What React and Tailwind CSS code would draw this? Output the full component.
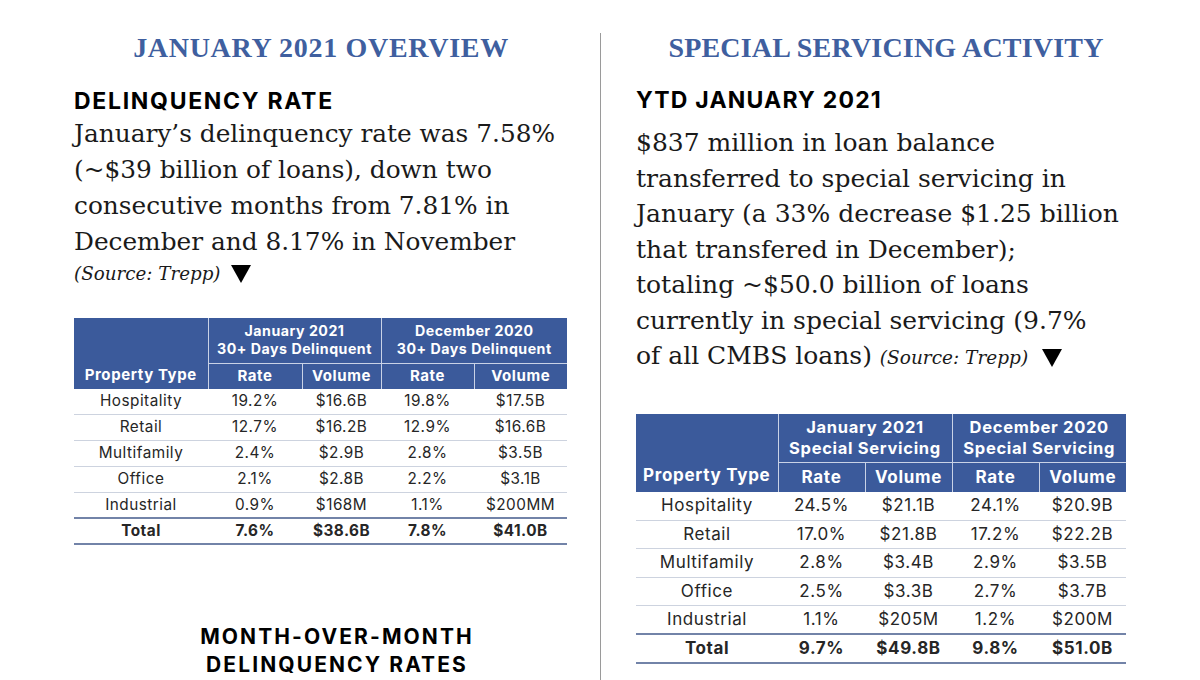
import React from 'react';

const TITLE = "font-['Liberation_Serif',serif]";
const SERIF = "font-['DejaVu_Serif',serif]";
const SANS = "font-['Inter',sans-serif]";

const delinquency = [
  ['Hospitality', '19.2%', '$16.6B', '19.8%', '$17.5B'],
  ['Retail', '12.7%', '$16.2B', '12.9%', '$16.6B'],
  ['Multifamily', '2.4%', '$2.9B', '2.8%', '$3.5B'],
  ['Office', '2.1%', '$2.8B', '2.2%', '$3.1B'],
  ['Industrial', '0.9%', '$168M', '1.1%', '$200MM'],
];
const delinquencyTotal = ['Total', '7.6%', '$38.6B', '7.8%', '$41.0B'];

const servicing = [
  ['Hospitality', '24.5%', '$21.1B', '24.1%', '$20.9B'],
  ['Retail', '17.0%', '$21.8B', '17.2%', '$22.2B'],
  ['Multifamily', '2.8%', '$3.4B', '2.9%', '$3.5B'],
  ['Office', '2.5%', '$3.3B', '2.7%', '$3.7B'],
  ['Industrial', '1.1%', '$205M', '1.2%', '$200M'],
];
const servicingTotal = ['Total', '9.7%', '$49.8B', '9.8%', '$51.0B'];

function Arrow() {
  return (
    <svg width="20" height="18" viewBox="0 0 20 18" className="inline-block">
      <path d="M0 0 H20 L10 18 Z" fill="#000" />
    </svg>
  );
}

function DataTable({ widths, groupA, groupB, rows, total, size }) {
  const big = size === 'lg';
  const head1 = big ? 'h-[49px]' : 'h-[45px]';
  const head2 = big ? 'h-[29px]' : 'h-[26px]';
  const rowH = big ? 'h-[28.6px]' : 'h-[25.9px]';
  const headText = big
    ? 'text-[16.5px] leading-[21px] tracking-[0.7px]'
    : 'text-[14.2px] leading-[18px] tracking-[0.5px]';
  const subText = big ? 'text-[17px] tracking-[0.7px]' : 'text-[15px] tracking-[0.6px]';
  const bodyText = big ? 'text-[17px] tracking-[0.6px]' : 'text-[15.3px] tracking-[0.5px]';

  return (
    <table className={`${SANS} border-collapse table-fixed`}>
      <colgroup>
        {widths.map((w, i) => (
          <col key={i} style={{ width: w }} />
        ))}
      </colgroup>
      <thead className="bg-[#3b5a9b] text-white">
        <tr className={head1}>
          <th rowSpan={2} className={`align-bottom pb-[3px] border-r border-[#c9d2e6] ${subText} font-bold`}>
            Property Type
          </th>
          <th colSpan={2} className={`border-r border-b border-[#c9d2e6] ${headText} font-bold`}>
            {groupA[0]}
            <br />
            {groupA[1]}
          </th>
          <th colSpan={2} className={`border-b border-[#c9d2e6] ${headText} font-bold`}>
            {groupB[0]}
            <br />
            {groupB[1]}
          </th>
        </tr>
        <tr className={head2}>
          <th className={`border-r border-[#c9d2e6] ${subText} font-bold`}>Rate</th>
          <th className={`border-r border-[#c9d2e6] ${subText} font-bold`}>Volume</th>
          <th className={`border-r border-[#c9d2e6] ${subText} font-bold`}>Rate</th>
          <th className={`${subText} font-bold`}>Volume</th>
        </tr>
      </thead>
      <tbody className={`text-[#262626] ${bodyText}`}>
        {rows.map((r, i) => (
          <tr
            key={r[0]}
            className={`${rowH} ${i < rows.length - 1 ? 'border-b border-[#cdd3df]' : 'border-b-2 border-[#7283a8]'}`}
          >
            {r.map((c, j) => (
              <td key={j} className="text-center">
                {c}
              </td>
            ))}
          </tr>
        ))}
        <tr className={`${rowH} border-b-2 border-[#7283a8] font-bold`}>
          {total.map((c, j) => (
            <td key={j} className="text-center">
              {c}
            </td>
          ))}
        </tr>
      </tbody>
    </table>
  );
}

export default function App() {
  return (
    <div className="w-[1200px] h-[680px] bg-white overflow-hidden flex">
      {/* Left column: overview */}
      <section className="w-[600px] pl-[74px] pr-[32px] pt-[30px] flex flex-col">
        <h1 className={`${TITLE} text-[#3f5f9f] font-bold text-[28px] leading-[36px] text-center w-[494px] tracking-[0.7px]`}>
          JANUARY 2021 OVERVIEW
        </h1>
        <h2 className={`${SANS} font-bold text-[23px] leading-[26px] mt-[22px] text-black tracking-[1.7px]`}>
          DELINQUENCY RATE
        </h2>
        <p className={`${SERIF} text-[24.8px] leading-[36px] text-[#1a1a1a] mt-[2px] whitespace-nowrap`}>
          January’s delinquency rate was 7.58%
          <br />
          (~$39 billion of loans), down two
          <br />
          consecutive months from 7.81% in
          <br />
          December and 8.17% in November
        </p>
        <p className={`${SERIF} italic text-[18.3px] leading-[28px] text-[#1a1a1a] flex items-center gap-[10px]`}>
          (Source: Trepp)
          <Arrow />
        </p>
        <div className="mt-[30px]">
          <DataTable
            widths={[134, 94, 79, 93, 93]}
            groupA={['January 2021', '30+ Days Delinquent']}
            groupB={['December 2020', '30+ Days Delinquent']}
            rows={delinquency}
            total={delinquencyTotal}
          />
        </div>
        <h3 className={`${SANS} font-bold text-[21px] leading-[28px] text-center text-black mt-[78px] w-[494px] pl-[32px] tracking-[2.1px]`}>
          MONTH-OVER-MONTH
          <br />
          DELINQUENCY RATES
        </h3>
      </section>

      {/* Divider */}
      <div className="w-px bg-[#9a9a9a] mt-[33px]" />

      {/* Right column: special servicing */}
      <section className="flex-1 pl-[35px] pt-[30px] flex flex-col">
        <h1 className={`${TITLE} text-[#3f5f9f] font-bold text-[28px] leading-[36px] text-center w-[500px] tracking-[0.2px]`}>
          SPECIAL SERVICING ACTIVITY
        </h1>
        <h2 className={`${SANS} font-bold text-[23px] leading-[26px] mt-[21px] text-black tracking-[1.2px]`}>
          YTD JANUARY 2021
        </h2>
        <p className={`${SERIF} text-[25px] leading-[35.5px] text-[#1a1a1a] mt-[12px] whitespace-nowrap`}>
          $837 million in loan balance
          <br />
          transferred to special servicing in
          <br />
          January (a 33% decrease $1.25 billion
          <br />
          that transfered in December);
          <br />
          totaling ~$50.0 billion of loans
          <br />
          currently in special servicing (9.7%
          <br />
          of all CMBS loans){' '}
          <span className="italic text-[18.5px]">(Source: Trepp)</span>
          <span className="ml-[14px]">
            <Arrow />
          </span>
        </p>
        <div className="mt-[38px]">
          <DataTable
            widths={[142, 87, 87, 87, 87]}
            groupA={['January 2021', 'Special Servicing']}
            groupB={['December 2020', 'Special Servicing']}
            rows={servicing}
            total={servicingTotal}
            size="lg"
          />
        </div>
      </section>
    </div>
  );
}
